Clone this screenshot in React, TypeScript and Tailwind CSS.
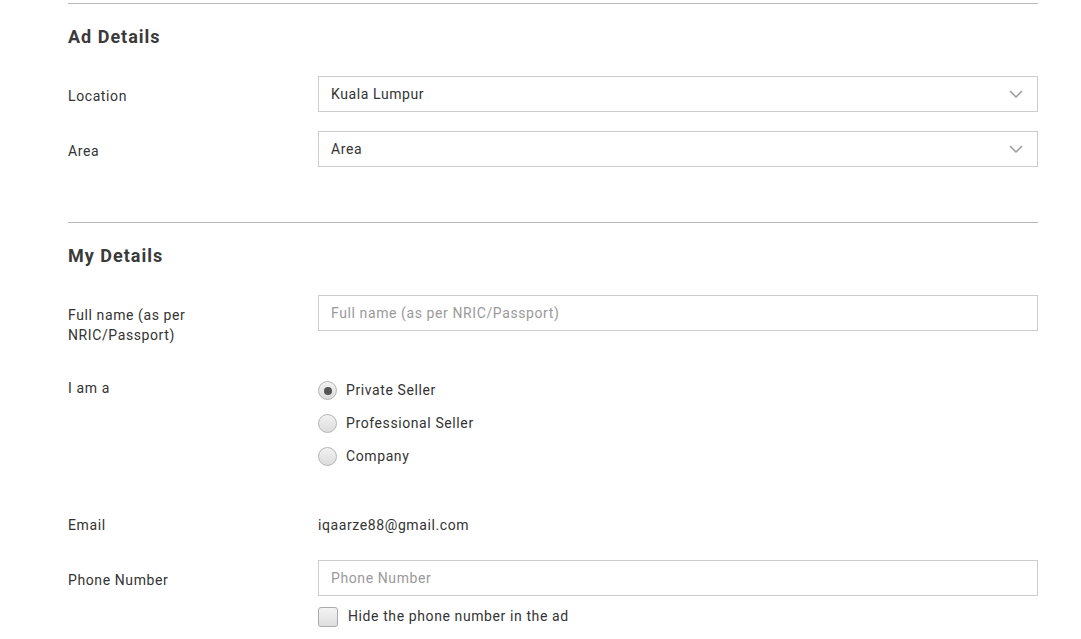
import React from "react";

const font = { fontFamily: "Roboto, 'Liberation Sans', sans-serif" };

function Chevron() {
  return (
    <svg width="14" height="8" viewBox="0 0 14 8" className="text-[#9a9a9a]">
      <polyline points="1,1 7,7 13,1" fill="none" stroke="currentColor" strokeWidth="1.5" />
    </svg>
  );
}

function Label({ children }: { children: React.ReactNode }) {
  return (
    <div className="w-[250px] shrink-0 pt-[10px]">
      <div className="w-[140px] text-[14px] leading-5 tracking-[0.6px] text-[#333]">{children}</div>
    </div>
  );
}

function SelectBox({ value }: { value: string }) {
  return (
    <div className="flex h-9 flex-1 items-center justify-between border border-[#ccc] bg-white pl-3 pr-[14px]">
      <span className="text-[14px] tracking-[0.6px] text-[#333]">{value}</span>
      <Chevron />
    </div>
  );
}

function TextBox({ placeholder }: { placeholder: string }) {
  return (
    <div className="flex h-9 w-full items-center border border-[#ccc] bg-white pl-3">
      <span className="text-[14px] tracking-[0.6px] text-[#9a9a9a]">{placeholder}</span>
    </div>
  );
}

function Radio({ label, checked }: { label: string; checked?: boolean }) {
  return (
    <div className="flex h-[33px] items-center">
      <span className="flex h-[19px] w-[19px] items-center justify-center rounded-full border border-[#b5b5b5] bg-gradient-to-b from-[#f2f2f2] to-[#dcdcdc]">
        {checked && <span className="h-2 w-2 rounded-full bg-[#555]" />}
      </span>
      <span className="ml-[9px] text-[14px] tracking-[0.6px] text-[#333]">{label}</span>
    </div>
  );
}

export default function App() {
  return (
    <div className="min-h-screen bg-white" style={font}>
      <div className="ml-[68px] w-[970px]">
        <div className="mt-[3px] border-t border-[#b8b8b8]" />
        <h2 className="mt-[21px] text-[18px] font-bold leading-6 tracking-[1px] text-[#3a3a3a]">Ad Details</h2>

        <div className="mt-[27px] flex">
          <Label>Location</Label>
          <SelectBox value="Kuala Lumpur" />
        </div>
        <div className="mt-[19px] flex">
          <Label>Area</Label>
          <SelectBox value="Area" />
        </div>

        <div className="mt-[55px] border-t border-[#b8b8b8]" />
        <h2 className="mt-[21px] text-[18px] font-bold leading-6 tracking-[1px] text-[#3a3a3a]">My Details</h2>

        <div className="mt-[27px] flex">
          <Label>Full name (as per NRIC/Passport)</Label>
          <div className="flex-1">
            <TextBox placeholder="Full name (as per NRIC/Passport)" />
          </div>
        </div>

        <div className="mt-[23px] flex">
          <Label>I am a</Label>
          <div className="pt-[6px]">
            <Radio label="Private Seller" checked />
            <Radio label="Professional Seller" />
            <Radio label="Company" />
          </div>
        </div>

        <div className="mt-[32px] flex h-9">
          <Label>Email</Label>
          <div className="pt-[10px] text-[14px] leading-5 tracking-[0.6px] text-[#333]">iqaarze88@gmail.com</div>
        </div>

        <div className="mt-[19px] flex">
          <Label>Phone Number</Label>
          <div className="flex-1">
            <TextBox placeholder="Phone Number" />
            <div className="mt-[10px] flex items-center">
              <span className="h-5 w-5 rounded-[3px] border border-[#aaa] bg-gradient-to-b from-[#f4f4f4] to-[#dedede]" />
              <span className="ml-[10px] text-[14px] tracking-[0.6px] text-[#333]">Hide the phone number in the ad</span>
            </div>
          </div>
        </div>
      </div>
    </div>
  );
}
